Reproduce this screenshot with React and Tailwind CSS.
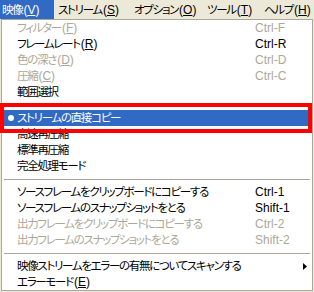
import React from 'react';

const font = { fontFamily: "'MS UI Gothic', 'Noto Sans CJK JP', sans-serif", fontFeatureSettings: '"palt"' };
const latin = { fontFamily: "'Liberation Sans', sans-serif" };

const topMenus = [
    { label: '映像', key: 'V', w: 'w-[54px] pl-[2px]', active: true },
    { label: 'ストリーム', key: 'S', w: 'w-[76px] pl-[4px]' },
    { label: 'オプション', key: 'O', w: 'w-[73px] pl-[4px]' },
    { label: 'ツール', key: 'T', w: 'w-[57px] pl-[4px]' },
    { label: 'ヘルプ', key: 'H', w: 'w-[54px] pl-[4px]' },
];

const items = [
    { label: 'フィルター', key: 'F', shortcut: 'Ctrl-F', disabled: true },
    { label: 'フレームレート', key: 'R', shortcut: 'Ctrl-R' },
    { label: '色の深さ', key: 'D', shortcut: 'Ctrl-D', disabled: true },
    { label: '圧縮', key: 'C', shortcut: 'Ctrl-C', disabled: true },
    { label: '範囲選択' },
    { sep: true },
    { label: 'ストリームの直接コピー', checked: true, active: true },
    { label: '高速再圧縮' },
    { label: '標準再圧縮' },
    { label: '完全処理モード' },
    { sep: true },
    { label: 'ソースフレームをクリップボードにコピーする', shortcut: 'Ctrl-1' },
    { label: 'ソースフレームのスナップショットをとる', shortcut: 'Shift-1' },
    { label: '出力フレームをクリップボードにコピーする', shortcut: 'Ctrl-2', disabled: true },
    { label: '出力フレームのスナップショットをとる', shortcut: 'Shift-2', disabled: true },
    { sep: true },
    { label: '映像ストリームをエラーの有無についてスキャンする', submenu: true },
    { label: 'エラーモード', key: 'E' },
];

function Label({ label, k }) {
    return (
        <span className="whitespace-nowrap">
            {label}
            {k && (
                <span className="tracking-normal text-[12px] ml-[1px]" style={latin}>
                    (<span className="underline underline-offset-[1px]">{k}</span>)
                </span>
            )}
        </span>
    );
}

function MenuItem({ item }) {
    if (item.sep) {
        return (
            <div className="h-[10px] pt-[5px] px-[2px]">
                <div className="h-px bg-[#aca899]" />
            </div>
        );
    }
    const color = item.active ? 'bg-[#316ac5] text-white' : item.disabled ? 'text-[#aca899]' : 'text-black';
    return (
        <div className={`relative flex items-center h-[16px] pl-[15px] ${color}`}>
            {item.checked && (
                <span className="absolute left-[6px] top-[5px] w-[6px] h-[6px] rounded-full bg-white" />
            )}
            <div className="w-[238px] shrink-0">
                <Label label={item.label} k={item.key} />
            </div>
            {item.shortcut && (
                <span className="whitespace-nowrap tracking-normal text-[12px]" style={latin}>
                    {item.shortcut}
                </span>
            )}
            {item.submenu && (
                <svg className="absolute right-[5px] top-[5px]" width="4" height="7" viewBox="0 0 4 7">
                    <path d="M0 0 L4 3.5 L0 7 Z" fill="#000" />
                </svg>
            )}
        </div>
    );
}

export default function App() {
    return (
        <div className="relative w-[314px] h-[292px] bg-[#ece9d8] overflow-hidden text-[11.5px] tracking-[-1.3px] leading-none" style={font}>
            <div className="flex h-[19px]">
                {topMenus.map((m) => (
                    <div
                        key={m.key}
                        className={`flex items-center h-full shrink-0 ${m.w} ${m.active ? 'bg-[#316ac5] text-white' : 'text-black'}`}
                    >
                        <Label label={m.label} k={m.key} />
                    </div>
                ))}
            </div>
            <div className="ml-[1px] w-[312px] bg-white border border-[#aca899] flex flex-col">
                {items.map((item, i) => (
                    <MenuItem key={i} item={item} />
                ))}
            </div>
            <div className="absolute left-0 top-[103px] w-[312px] h-[30px] border-[4px] border-[#ff0000]" />
        </div>
    );
}
